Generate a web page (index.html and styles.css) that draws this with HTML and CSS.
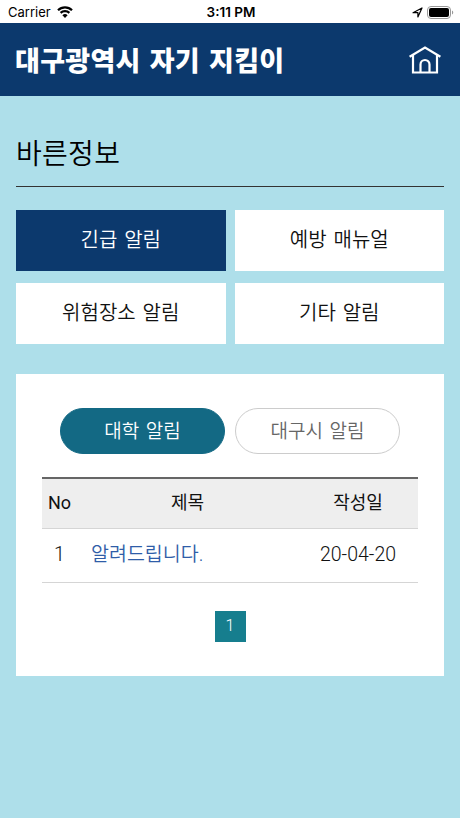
FILE: index.html
```html
<!DOCTYPE html>
<html lang="ko">
<head>
    <meta charset="UTF-8">
    <meta name="viewport" content="width=device-width, initial-scale=1.0">
    <title>대구광역시 자기 지킴이</title>
    <link rel="stylesheet" href="styles.css">
</head>
<body>
    <!-- status bar -->
    <div class="status">
        <div class="status-left">
            <span>Carrier</span>
            <svg class="wifi" width="16" height="12" viewBox="0 0 16 12">
                <path d="M1 4.2a10 10 0 0 1 14 0M3.6 6.9a6.3 6.3 0 0 1 8.8 0" fill="none" stroke="#000" stroke-width="2.2"/>
                <path d="M8 12L5.4 9.3a3.7 3.7 0 0 1 5.2 0z"/>
            </svg>
        </div>
        <div class="status-time">3:11 PM</div>
        <div class="status-right">
            <svg width="11" height="11" viewBox="0 0 11 11">
                <path d="M1 5.7L10 1 5.9 10V5.7z" fill="none" stroke="#000" stroke-width="1.2" stroke-linejoin="round"/>
            </svg>
            <svg width="27" height="13" viewBox="0 0 27 13">
                <rect x=".5" y=".5" width="23" height="12" rx="3.5" fill="none" stroke="#999"/>
                <rect x="2" y="2" width="20" height="9" rx="2"/>
                <path d="M25 4.5c1.700.6 1.700 3.400 0 4z" fill="#999"/>
            </svg>
        </div>
    </div>

    <header class="header">
        <h1 class="logo">대구광역시 자기 지킴이</h1>
        <a href="#" class="home">
            <svg width="32" height="28" viewBox="0 0 32 28" fill="none" stroke="#fff" stroke-width="2.2">
                <path d="M.6 10.700L16 1.500l15.400 9.200"/>
                <path d="M4 9v17.500h24V9"/>
                <path d="M11.500 26.500V18.500a4.500 4.500 0 0 1 9 0v8"/>
            </svg>
        </a>
    </header>

    <main class="content">
        <h2 class="page-title">바른정보</h2>

        <nav class="menu">
            <a href="#" class="on">긴급 알림</a>
            <a href="#">예방 매뉴얼</a>
            <a href="#">위험장소 알림</a>
            <a href="#">기타 알림</a>
        </nav>

        <section class="board">
            <div class="tabs">
                <a href="#" class="on">대학 알림</a>
                <a href="#">대구시 알림</a>
            </div>
            <table class="list">
                <thead>
                    <tr>
                        <th class="no">No</th>
                        <th>제목</th>
                        <th class="date">작성일</th>
                    </tr>
                </thead>
                <tbody>
                    <tr>
                        <td class="no">1</td>
                        <td class="subject"><a href="#">알려드립니다.</a></td>
                        <td class="date">20-04-20</td>
                    </tr>
                </tbody>
            </table>
            <div class="paging">
                <a href="#" class="on">1</a>
            </div>
        </section>
    </main>
</body>
</html>
```
FILE: styles.css
```css
* {
    box-sizing: border-box;
    margin: 0;
    padding: 0;
}

body {
    min-height: 818px;
    background: #aedfea;
    color: #111;
    font-family: Roboto, "Noto Sans CJK KR", sans-serif;
    font-weight: 350;
}

a {
    color: inherit;
    text-decoration: none;
}

svg {
    display: block;
}

/* status bar */
.status {
    display: grid;
    grid-template-columns: 1fr auto 1fr;
    align-items: center;
    height: 23px;
    padding: 1px 6px 0 8px;
    background: #fff;
    color: #000;
    font: 400 13px Inter, sans-serif;
}

.status-left,
.status-right {
    display: flex;
    align-items: center;
    gap: 6px;
}

.status-right {
    justify-content: flex-end;
    gap: 4px;
}

.status-time {
    font-size: 13.5px;
    font-weight: 600;
}

/* header */
.header {
    display: flex;
    align-items: center;
    justify-content: space-between;
    height: 73px;
    padding: 0 19px 0 15px;
    background: #0c396d;
}

.logo {
    padding-top: 5px;
    color: #fff;
    font-size: 27px;
    font-weight: 900;
    letter-spacing: .3px;
    line-height: 68px;
    word-spacing: 2px;
}

/* content */
.content {
    padding: 32px 16px 0;
}

.page-title {
    height: 59px;
    border-bottom: 1px solid #333;
    color: #000;
    font-size: 28px;
    font-weight: 350;
    letter-spacing: .3px;
    line-height: 54px;
}

.menu {
    display: grid;
    grid-template-columns: 1fr 1fr;
    gap: 12px 9px;
    margin-top: 23px;
}

.menu a {
    height: 61px;
    background: #fff;
    font-size: 20px;
    line-height: 60px;
    text-align: center;
    word-spacing: 2px;
}

.menu .on {
    background: #0c396d;
    color: #fff;
}

/* board */
.board {
    height: 302px;
    margin-top: 30px;
    padding: 34px 26px 0;
    background: #fff;
}

.tabs {
    display: flex;
    justify-content: center;
    gap: 10px;
}

.tabs a {
    width: 165px;
    height: 46px;
    border: 1px solid #ccc;
    border-radius: 23px;
    color: #666;
    font-size: 19px;
    line-height: 45px;
    text-align: center;
    word-spacing: 2px;
}

.tabs .on {
    border-color: #136984;
    background: #136984;
    color: #fff;
}

.list {
    width: 100%;
    margin-top: 23px;
    border-collapse: separate;
    border-spacing: 0;
    table-layout: fixed;
}

.list th {
    height: 52px;
    padding-bottom: 1px;
    border-top: 2px solid #666;
    border-bottom: 1px solid #d5d5d5;
    background: #eee;
    font-size: 18px;
    font-weight: 400;
    line-height: 48px;
}

.list td {
    height: 54px;
    padding-bottom: 2px;
    border-bottom: 1px solid #d5d5d5;
    font-size: 19.5px;
    line-height: 49px;
    text-align: center;
}

.list .no {
    width: 35px;
}

.list .date {
    width: 120px;
}

.list .subject {
    padding-left: 14px;
    color: #2f5da8;
    text-align: left;
}

.paging {
    display: flex;
    justify-content: center;
    margin-top: 28px;
}

.paging a {
    width: 31px;
    height: 31px;
    background: #167e8e;
    color: #fff;
    font-size: 16px;
    font-weight: 300;
    line-height: 29px;
    text-align: center;
}
```
